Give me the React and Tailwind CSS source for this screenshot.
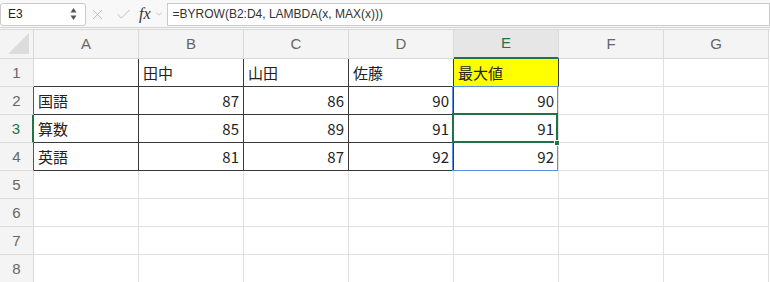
import { ChevronDown, X, Check } from 'lucide-react'

const cols = ['A', 'B', 'C', 'D', 'E', 'F', 'G']
const DARK = '#3a3a3a'
const GRID = '#e0e0e0'

const data = [
  ['', '田中', '山田', '佐藤', '最大値', '', ''],
  ['国語', 87, 86, 90, 90, '', ''],
  ['算数', 85, 89, 91, 91, '', ''],
  ['英語', 81, 87, 92, 92, '', ''],
  ['', '', '', '', '', '', ''],
  ['', '', '', '', '', '', ''],
  ['', '', '', '', '', '', ''],
  ['', '', '', '', '', '', ''],
]

const Cell = ({ value, r, c }) => {
  const inTable = r <= 3 && c <= 3
  const right = inTable || (r === 0 && c === 4) ? DARK : GRID
  const bottom = inTable ? DARK : GRID
  const isNum = typeof value === 'number'
  const yellow = r === 0 && c === 4
  return (
    <div
      className={`h-[28px] flex items-center px-[4px] pt-[2px] text-[15px] text-[#222] ${isNum ? 'justify-end' : 'justify-start'} ${yellow ? 'bg-[#ffff00]' : 'bg-white'}`}
      style={{ borderRight: `1px solid ${right}`, borderBottom: `1px solid ${bottom}` }}
    >
      {value}
    </div>
  )
}

export default function App() {
  return (
    <div className="w-[770px] h-[282px] overflow-hidden bg-white" style={{ fontFamily: '"Noto Sans CJK JP", "Liberation Sans", sans-serif' }}>
      {/* formula bar */}
      <div className="h-[28px] bg-[#f8f8f8] border-b border-[#d2d2d2] flex items-center pt-[1px]">
        <div className="w-[86px] h-[23px] bg-white border border-[#cacaca] rounded-[3px] flex items-center justify-between pl-[7px] pr-[8px]">
          <span className="text-[12px] text-[#222]" style={{ fontFamily: '"Liberation Sans", sans-serif' }}>E3</span>
          <svg width="7" height="14" viewBox="0 0 7 14" className="text-[#555]">
            <path d="M3.5 1 L6.5 5.5 L0.5 5.5 Z" fill="currentColor" />
            <path d="M3.5 13 L6.5 8.5 L0.5 8.5 Z" fill="currentColor" />
          </svg>
        </div>
        <X size={17} strokeWidth={1.3} className="ml-[3px] text-[#b8b8b8]" />
        <Check size={17} strokeWidth={1.3} className="ml-[9px] text-[#b8b8b8]" />
        <span className="ml-[7px] text-[16px] italic text-[#333]" style={{ fontFamily: '"Liberation Serif", serif' }}>fx</span>
        <ChevronDown size={10} strokeWidth={1.5} className="ml-[3px] text-[#aaa]" />
        <div className="ml-[3px] flex-1 h-[23px] bg-white border border-[#cacaca] flex items-center pl-[5px]">
          <span className="text-[12px] text-[#333]" style={{ fontFamily: '"Liberation Sans", sans-serif' }}>=BYROW(B2:D4, LAMBDA(x, MAX(x)))</span>
        </div>
      </div>
      <div className="h-[2px] bg-[#f8f8f8] border-b border-[#d8d8d8]" />

      {/* sheet */}
      <div className="relative grid grid-cols-[34px_repeat(7,105px)]">
        {/* corner */}
        <div className="h-[29px] bg-[#f4f4f4] border-r border-b border-[#d9d9d9] relative">
          <div
            className="absolute right-[4px] bottom-[4px] w-[21px] h-[21px] bg-[#dcdcdc]"
            style={{ clipPath: 'polygon(100% 0, 100% 100%, 0 100%)' }}
          />
        </div>
        {cols.map((c) => (
          <div
            key={c}
            className={`h-[29px] flex items-center justify-center text-[15px] border-r ${c === 'E' ? 'bg-[#e6e6e6] text-[#217346] border-b-2 border-b-[#217346] border-r-[#d9d9d9]' : 'bg-[#f4f4f4] text-[#666] border-b border-[#d9d9d9]'}`}
            style={{ fontFamily: '"Liberation Sans", sans-serif' }}
          >
            {c}
          </div>
        ))}
        {data.map((row, r) => (
          <div key={r} className="contents">
            <div
              className={`h-[28px] flex items-center justify-center pt-[1px] text-[15px] bg-[#f4f4f4] border-b border-[#dcdcdc] ${r === 2 ? 'bg-[#e6e6e6] text-[#217346] border-r-2 border-r-[#217346]' : r === 1 || r === 3 ? 'text-[#666] border-r border-r-[#555]' : 'text-[#666] border-r border-r-[#d9d9d9]'}`}
              style={{ fontFamily: '"Liberation Sans", sans-serif' }}
            >
              {r + 1}
            </div>
            {row.map((v, c) => (
              <Cell key={c} value={v} r={r} c={c} />
            ))}
          </div>
        ))}

        {/* blue spill range E2:E4 */}
        <div className="absolute left-[452px] top-[56px] w-[106px] h-[85px] border border-[#5b8fe3] pointer-events-none" />
        {/* active cell E3 */}
        <div className="absolute left-[452px] top-[83px] w-[106px] h-[30px] border-2 border-[#217346] pointer-events-none" />
        <div className="absolute left-[554px] top-[110px] w-[6px] h-[6px] bg-[#217346] border border-white pointer-events-none" />
      </div>
    </div>
  )
}
